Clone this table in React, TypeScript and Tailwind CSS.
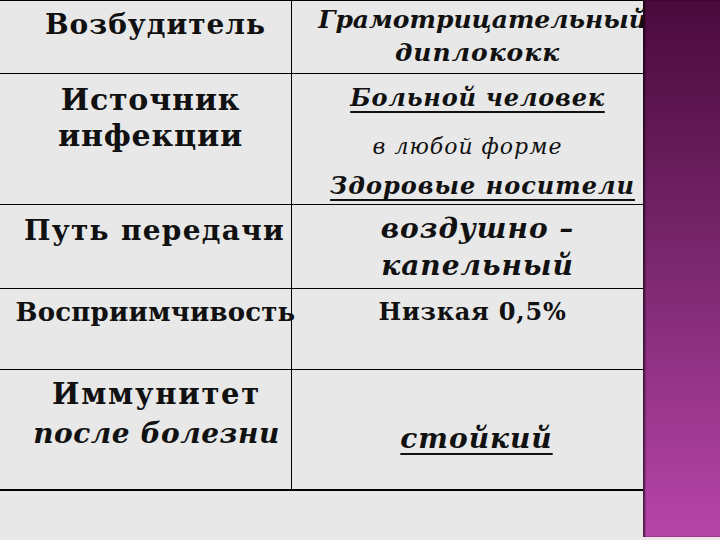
const serif = "font-['DejaVu_Serif','Liberation_Serif',serif]"

export default function App() {
  return (
    <div className={`flex h-[540px] w-[720px] overflow-hidden bg-[#e8e8e8] text-[#111] ${serif}`}>
      <div className="w-[643px] shrink-0">
        <div className="grid grid-cols-[292px_351px] grid-rows-[73px_131px_84px_81px_121px] border-t border-black">
          {/* Возбудитель */}
          <div className="flex justify-center border-r border-b border-black pt-[5px] text-[28px] font-bold leading-[38px] tracking-[1px]">
            <span className="pl-[20px]">Возбудитель</span>
          </div>
          <div className="flex flex-col items-center overflow-hidden whitespace-nowrap border-b border-black pt-[2px] text-[25px] font-bold italic leading-[33px]">
            <span className="pl-[30px]">Грамотрицательный</span>
            <span className="pl-[20px] tracking-[1px]">диплококк</span>
          </div>

          {/* Источник инфекции */}
          <div className="flex flex-col items-center border-r border-b border-black pl-[10px] pt-[8px] text-[30px] font-bold leading-[36px] tracking-[0.8px]">
            <span>Источник</span>
            <span>инфекции</span>
          </div>
          <div className="flex flex-col items-center border-b border-black pt-[8px] whitespace-nowrap">
            <span className="pl-[20px] text-[24px] font-bold italic leading-[32px] tracking-[0.8px] underline decoration-2 underline-offset-[5px]">
              Больной человек
            </span>
            <span className="pt-[19px] text-[22px] italic leading-[28px] tracking-[1px]">в любой форме</span>
            <span className="pl-[30px] pt-[10px] text-[24px] font-bold italic leading-[30px] tracking-[1px] underline decoration-2 underline-offset-[5px]">
              Здоровые носители
            </span>
          </div>

          {/* Путь передачи */}
          <div className="flex justify-center border-r border-b border-black pt-[7px] text-[28px] font-bold leading-[38px] tracking-[1.3px]">
            <span className="pl-[18px]">Путь передачи</span>
          </div>
          <div className="flex flex-col items-center border-b border-black pl-[20px] pt-[5px] text-[28px] font-bold italic leading-[37px] tracking-[1px]">
            <span>воздушно –</span>
            <span>капельный</span>
          </div>

          {/* Восприимчивость */}
          <div className="flex justify-center whitespace-nowrap border-r border-b border-black pt-[5px] text-[26px] font-bold leading-[36px] tracking-[0.2px]">
            <span className="pl-[20px]">Восприимчивость</span>
          </div>
          <div className="flex justify-center border-b border-black pt-[5px] text-[24px] font-bold leading-[36px] tracking-[0.8px]">
            <span className="pl-[10px]">Низкая 0,5%</span>
          </div>

          {/* Иммунитет */}
          <div className="flex flex-col items-center border-r border-b-2 border-black pl-[22px] pt-[5px] leading-[39px]">
            <span className="text-[29px] font-bold tracking-[1.7px]">Иммунитет</span>
            <span className="text-[28px] font-bold italic tracking-[0.5px]">после болезни</span>
          </div>
          <div className="flex justify-center border-b-2 border-black pt-[50px] text-[28px] font-bold italic leading-[38px] tracking-[1px]">
            <span className="pl-[18px] underline decoration-2 underline-offset-[5px]">стойкий</span>
          </div>
        </div>
      </div>

      <div className="flex flex-1 flex-col">
        <div className="h-[537px] bg-gradient-to-b from-[#4a0a3c] via-[#7c2870] to-[#b845aa] shadow-[inset_2px_0_2px_rgba(0,0,0,0.6)]" />
        <div className="flex-1 bg-[#efe3ec]" />
      </div>
    </div>
  )
}
